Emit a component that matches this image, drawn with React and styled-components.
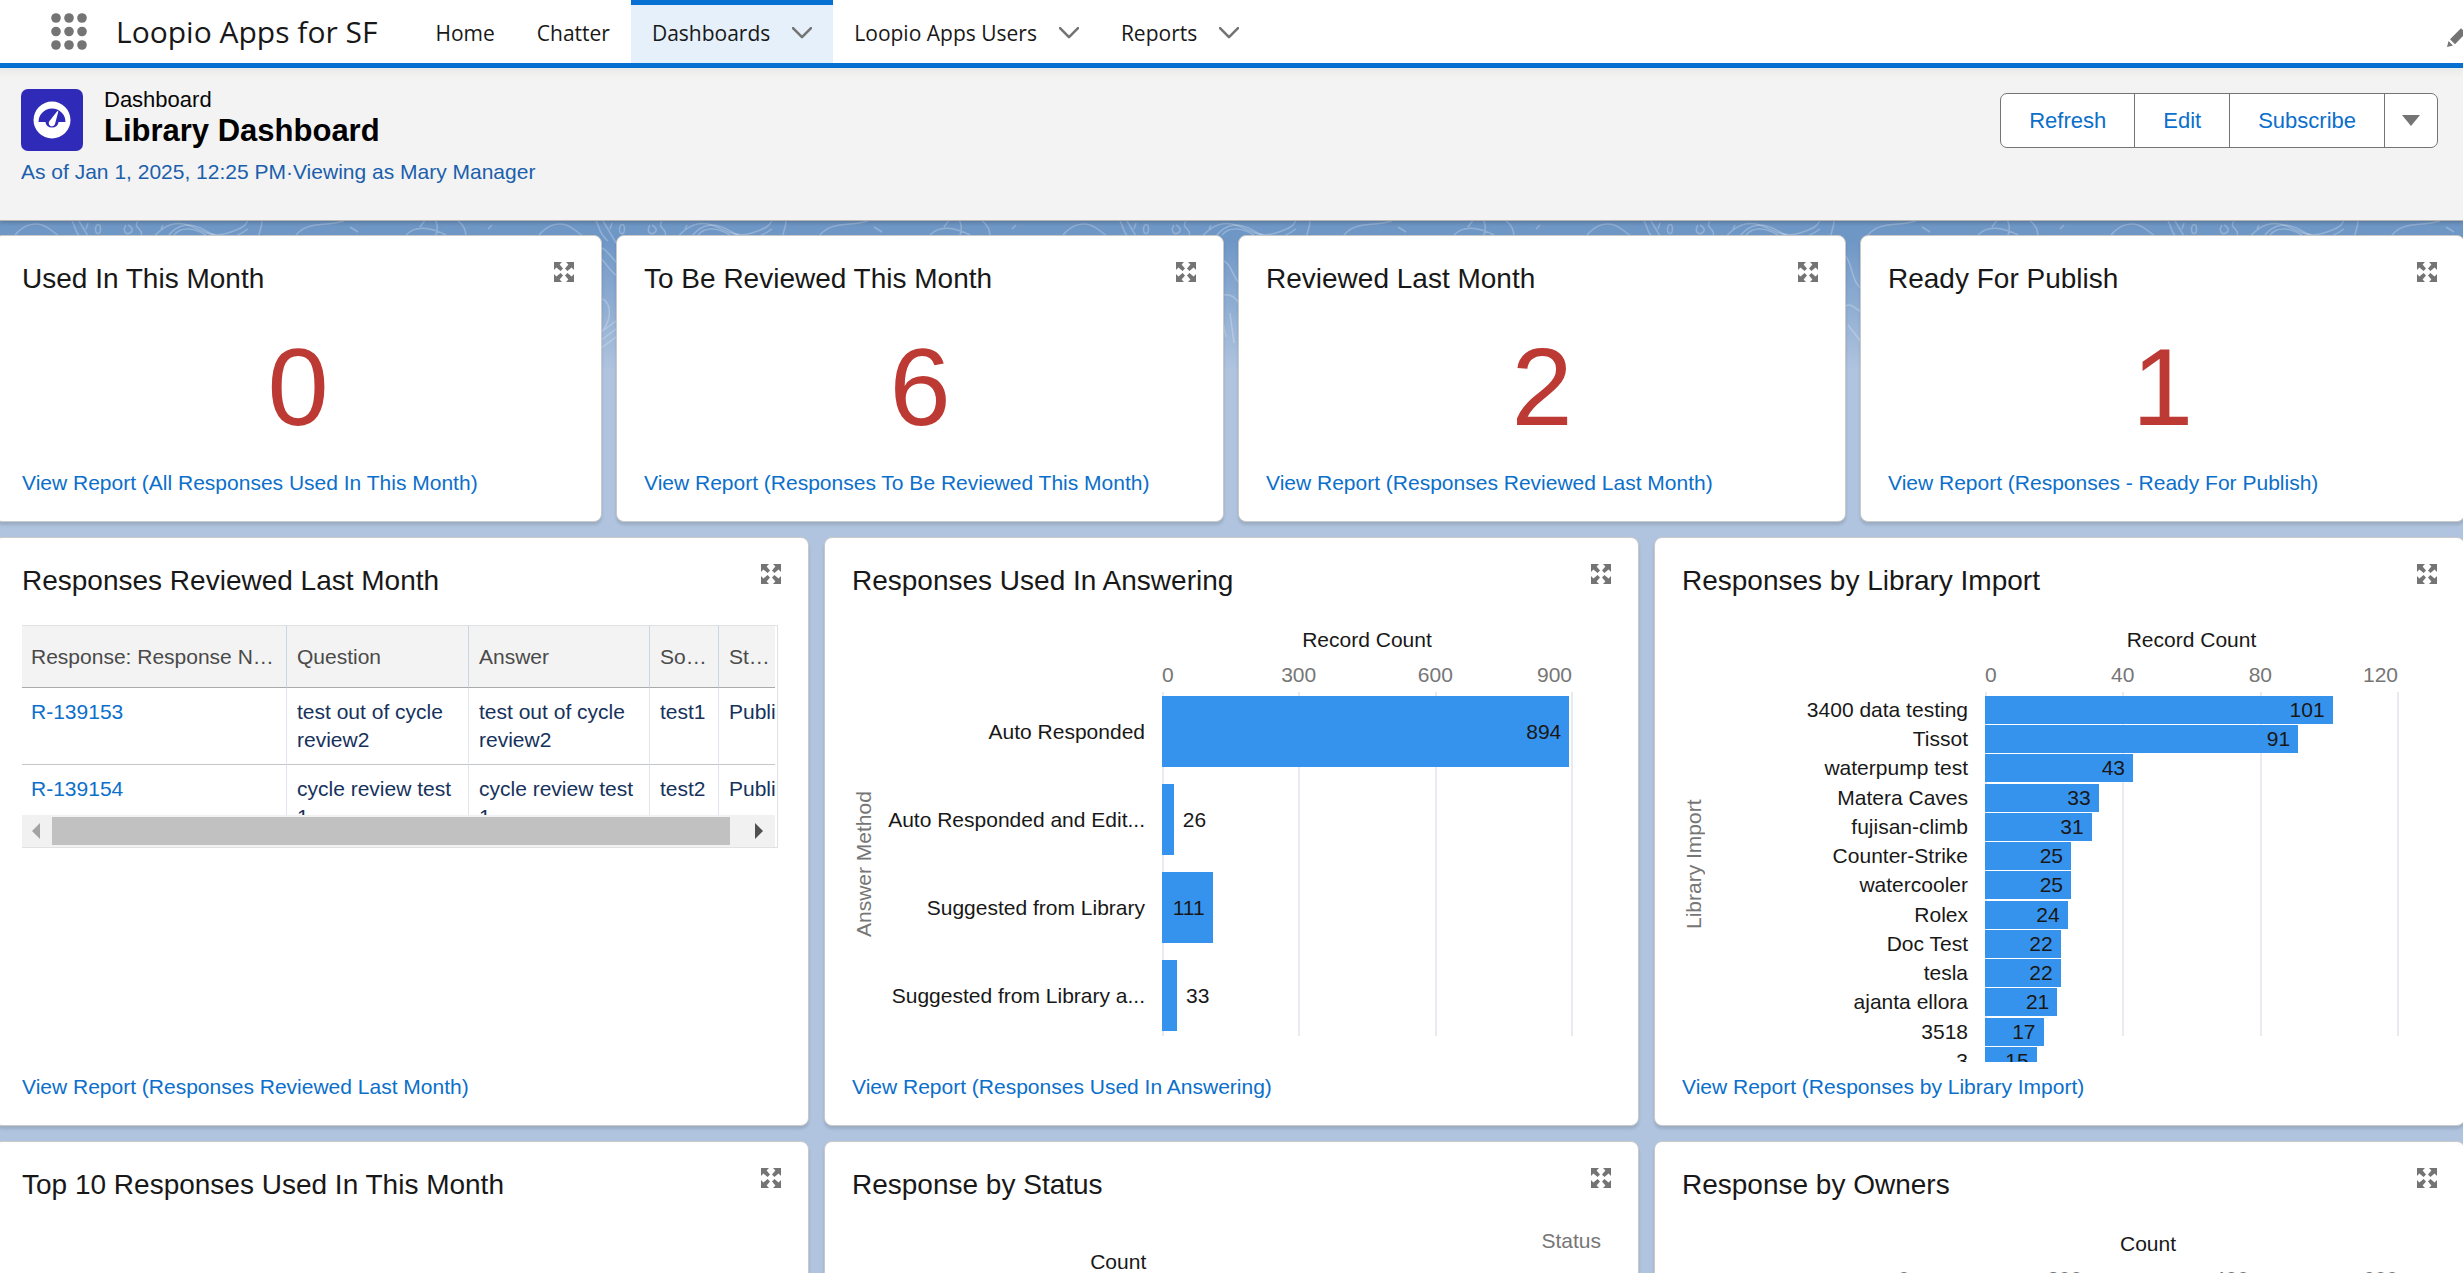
import React from "react";
import styled, { createGlobalStyle, css } from "styled-components";

const GlobalStyle = createGlobalStyle`
	* {
		box-sizing: border-box;
	}
	body {
		margin: 0;
		overflow: hidden;
		font-family: "Liberation Sans", Arial, sans-serif;
		font-size: 21px;
		line-height: 28px;
		color: #181818;
	}
	a {
		color: inherit;
		text-decoration: none;
	}
	button {
		margin: 0;
		padding: 0;
		border: 0;
		background: none;
		font: inherit;
		color: inherit;
		cursor: pointer;
	}
`;

// contour lines drawn behind the cards, one tile
const contour = encodeURIComponent(`
<svg xmlns="http://www.w3.org/2000/svg" width="524" height="150" fill="none" stroke="#fff" stroke-opacity="0.24" stroke-width="1.5">
	<path d="M15 14C25 2 38 0 48 7S58 14 62 18"/>
	<path d="M72 0C76 6 74 12 84 20M79 0C84 8 86 12 92 22"/>
	<ellipse cx="98" cy="8" rx="2.5" ry="4.500"/>
	<path d="M88 2L86 8M126 4C122 10 126 14 130 12S132 6 128 4M138 0C132 8 146 8 140 16M163 4L161 8"/>
	<path d="M152 18C160 8 170 0 184 3S208 18 228 12S246 2 250-4"/>
	<path d="M174 14C182 4 196 8 206 14M166 18C178 0 192 2 206 10S232 20 248 8"/>
	<path d="M262 0C262 8 258 12 258 20M296 14C308 0 322 6 344 0M350 6L358 11"/>
	<path d="M406 14C416 4 430 6 446 14M420 6C424 0 428-4 432-6M434-4C438 4 438 8 436 14M458 0C464 4 466 10 466 16M488 8L492 4"/>
	<path d="M70 24C84 26 88 40 98 46M72 34C82 38 84 52 98 58M70 90C76 66 90 84 84 100S74 110 70 120M76 112L92 100M76 120L92 108M76 128L92 116"/>
	<path d="M170 40C184 36 184 60 194 64M172 76C182 70 190 78 192 86M174 96L178 116M182 92L186 122"/>
	<path d="M270 30C284 44 276 62 294 70M272 86C280 78 288 96 294 90M276 104L290 122"/>
</svg>`);

const Page = styled.div`
	display: flex;
	flex-direction: column;
	height: 100vh;
	overflow: hidden;
	background: #b0c4df;
`;

const Nav = styled.nav`
	flex: none;
	display: flex;
	align-items: stretch;
	height: 68px;
	padding-left: 51px;
	border-bottom: 5px solid #0670d3;
	background: #fff;
	font-family: "Open Sans", "Noto Sans", sans-serif;
	white-space: nowrap;
`;

const Launcher = styled.button`
	display: flex;
	align-items: center;
	margin-right: 29px;
`;

const AppName = styled.span`
	margin-right: 37px;
	font-size: 30px;
	line-height: 63px;
`;

const Tab = styled.a`
	display: flex;
	align-items: center;
	gap: 22px;
	padding: 0 21px 3px;
	border-top: 5px solid transparent;
	font-size: 21px;

	${p =>
		p.$active &&
		css`
			border-top-color: #0670d3;
			background: #e5f0fa;
		`}
`;

const NavEdit = styled.button`
	flex: none;
	display: flex;
	align-items: center;
	margin-left: auto;
	margin-right: -5px;
	padding-top: 11px;
`;

const Header = styled.header`
	position: relative;
	flex: none;
	display: flex;
	justify-content: space-between;
	align-items: flex-start;
	padding: 19px 25px 34px 21px;
	border-bottom: 1px solid #b4b4b4;
	background: linear-gradient(#eaeae8, #f3f3f3 10px);
	box-shadow: 0 2px 4px rgba(0, 0, 0, 0.2);
`;

const TitleRow = styled.div`
	display: flex;
	gap: 21px;
	margin-bottom: 7px;
`;

const HeaderIcon = styled.svg`
	margin-top: 2px;
	border-radius: 7px;
	background: #2f2ab8;
`;

const Kind = styled.div`
	font-size: 22px;
	line-height: 26px;
	color: #080707;
`;

const PageTitle = styled.h1`
	margin: 0;
	font-size: 31px;
	line-height: 36px;
	color: #000;
`;

const AsOf = styled.div`
	color: #1b5fac;
`;

const ButtonGroup = styled.div`
	display: flex;
	height: 55px;
	margin-top: 6px;
	border: 1px solid #747474;
	border-radius: 7px;
	background: #fff;
	overflow: hidden;
`;

const GroupButton = styled.button`
	display: flex;
	align-items: center;
	justify-content: center;
	padding: ${p => (p.$icon ? "0 17px" : "0 28px")};
	font-size: 22px;
	color: #0b6fcb;

	& + & {
		border-left: 1px solid #747474;
	}
`;

const Board = styled.main`
	flex: 1;
	display: flex;
	flex-direction: column;
	gap: 15px;
	min-height: 0;
	margin: 0 -2px 0 -6px;
	padding-top: 14px;
	background: url("data:image/svg+xml,${contour}") 6px 0 repeat-x,
		linear-gradient(#6f97c6 20px, #b0c4df 150px);
`;

const Row = styled.div`
	flex: none;
	display: grid;
	grid-template-columns: ${p => p.$columns};
	gap: ${p => p.$gap}px;
`;

const CardBox = styled.section`
	display: flex;
	flex-direction: column;
	min-width: 0;
	min-height: ${p => p.$minHeight}px;
	padding: 25px 27px 24px;
	border: 1px solid #c9c9c9;
	border-radius: 8px;
	background: #fff;
	box-shadow: 0 3px 3px rgba(0, 0, 0, 0.12);
`;

const CardHeader = styled.div`
	display: flex;
	justify-content: space-between;
	align-items: flex-start;
`;

const CardTitle = styled.h2`
	margin: 0;
	font-size: 28px;
	font-weight: 400;
	line-height: 36px;
`;

const Expand = styled.button`
	display: flex;
	margin-top: 1px;
`;

const Body = styled.div`
	flex: 1 1 0;
	min-height: 0;
	overflow: hidden;
	margin-bottom: 11px;
	padding-top: ${p => p.$top || 26}px;
`;

const ReportLink = styled.a`
	align-self: flex-start;
	color: #0b6fcb;
`;

const Metric = styled.div`
	font-size: 110px;
	line-height: 108px;
	text-align: center;
	color: #bd3933;
`;

const TableBox = styled.div`
	margin: 0 3px 0 -2px;
	border: 1px solid #dfe1e5;
	border-left: 0;
`;

const TableClip = styled.div`
	height: 189px;
	margin-right: 2px;
	overflow: hidden;
`;

const Table = styled.table`
	width: 767px;
	table-layout: fixed;
	border-collapse: separate;
	border-spacing: 0;
	color: #16325c;

	th,
	td {
		padding: 10px 8px 10px 11px;
		border-bottom: 1px solid #c4c6ca;
		text-align: left;
		vertical-align: top;
	}
	th {
		height: 62px;
		padding: 0 0 0 11px;
		border-bottom-color: #a8aaad;
		background: #f3f3f3;
		font-weight: 400;
		color: #4a4a4a;
		vertical-align: middle;
		white-space: nowrap;
	}
	th + th {
		border-left: 1px solid #ccd5e2;
		padding-left: 10px;
	}
	td + td {
		border-left: 1px solid #e0e5ee;
		padding-left: 10px;
	}
	td a {
		color: #0b6fcb;
	}
`;

const ScrollTrack = styled.div`
	display: flex;
	align-items: center;
	gap: 12px;
	height: 32px;
	margin-right: 2px;
	padding: 0 12px;
	background: #f1f1f1;
`;

const ScrollThumb = styled.div`
	flex: 1;
	height: 28px;
	margin-right: 13px;
	background: #c1c1c1;
`;

const ChartGrid = styled.div`
	display: grid;
	grid-template-columns: 24px ${p => p.$labels}px 1fr;
	margin-right: 39px;
`;

const MeasureName = styled.div`
	grid-column: 3;
	line-height: 30px;
	text-align: center;
`;

const Ticks = styled.div`
	grid-column: 3;
	display: flex;
	justify-content: space-between;
	margin: 6px 0 3px;
	color: #767676;
`;

const Tick = styled.span`
	flex: 2 1 0;
	text-align: center;

	&:first-child {
		flex-grow: 1;
		text-align: left;
	}
	&:last-child {
		flex-grow: 1;
		text-align: right;
	}
`;

const AxisName = styled.div`
	grid-row: 3;
	grid-column: 1;
	height: 344px;
	line-height: 24px;
	writing-mode: vertical-rl;
	transform: rotate(180deg);
	text-align: center;
	color: #767676;
`;

const GridLines = styled.div`
	grid-row: 3;
	grid-column: 3;
	display: flex;
	justify-content: space-between;
	height: 344px;
	margin-right: -1px;

	i {
		width: 2px;
		background: #e8ebf1;
	}
`;

const Bars = styled.div`
	grid-row: 3;
	grid-column: 2 / 4;
	display: flex;
	flex-direction: column;
	height: ${p => p.$height}px;
	margin-top: 4px;
`;

const BarRow = styled.div`
	flex: 1 1 0;
	display: grid;
	grid-template-columns: ${p => p.$labels}px 1fr;
	padding-bottom: ${p => p.$gap}px;
	min-height: 0;
	white-space: nowrap;
`;

const BarLabel = styled.div`
	align-self: center;
	padding-right: 17px;
	text-align: right;
`;

const BarTrack = styled.div`
	display: flex;
	align-items: center;
	gap: 9px;
`;

const Bar = styled.div`
	display: flex;
	align-items: center;
	justify-content: flex-end;
	height: 100%;
	padding-right: ${p => (p.$filled ? 8 : 0)}px;
	background: #3693ed;
`;

const DonutArea = styled.div`
	display: flex;
	align-items: flex-start;
	justify-content: space-between;
	padding-right: 10px;
`;

const DonutMeasure = styled.div`
	flex: 1;
	padding: 19px 157px 0 0;
	text-align: center;
`;

const Legend = styled.div`
	line-height: 24px;
	color: #767676;
`;

const Chevron = () => (
	<svg width="20" height="12" viewBox="0 0 20 12" fill="none" stroke="#747474" strokeWidth="2.600">
		<path d="M1 1.200l9 9 9-9" strokeLinecap="round" strokeLinejoin="round" />
	</svg>
);

const Arrow = ({ left, color }) => (
	<svg width="8" height="16" viewBox="0 0 8 16" fill={color}>
		<path d={left ? "M8 0v16L0 8z" : "M0 0v16l8-8z"} />
	</svg>
);

const corner = "M0 0h8L5.600 2.400l3.400 4.200L6.600 9 2.400 5.600 0 8z";

const ExpandIcon = () => (
	<svg width="20" height="20" viewBox="0 0 20 20" fill="#747474">
		{[0, 90, 180, 270].map(angle => (
			<path key={angle} d={corner} transform={`rotate(${angle} 10 10)`} />
		))}
	</svg>
);

const Card = ({ title, report, minHeight, children }) => (
	<CardBox $minHeight={minHeight}>
		<CardHeader>
			<CardTitle>{title}</CardTitle>
			<Expand aria-label={`Expand ${title}`}>
				<ExpandIcon />
			</Expand>
		</CardHeader>
		{children}
		{report && <ReportLink href="#report">View Report ({report})</ReportLink>}
	</CardBox>
);

const BarChart = ({ measure, axis, ticks, labels, rows = [], height, gap }) => {
	const max = ticks[ticks.length - 1];
	return (
		<ChartGrid $labels={labels}>
			<MeasureName>{measure}</MeasureName>
			<Ticks>
				{ticks.map(t => (
					<Tick key={t}>{t}</Tick>
				))}
			</Ticks>
			<AxisName>{axis}</AxisName>
			<GridLines>
				{ticks.map(t => (
					<i key={t} />
				))}
			</GridLines>
			<Bars $height={height}>
				{rows.map(([name, value]) => {
					const filled = value / max > 0.1;
					return (
						<BarRow key={name} $labels={labels} $gap={gap}>
							<BarLabel>{name}</BarLabel>
							<BarTrack>
								<Bar $filled={filled} style={{ width: `${(value / max) * 100}%` }}>
									{filled && value}
								</Bar>
								{!filled && <span>{value}</span>}
							</BarTrack>
						</BarRow>
					);
				})}
			</Bars>
		</ChartGrid>
	);
};

const metrics = [
	["Used In This Month", 0, "All Responses Used In This Month"],
	["To Be Reviewed This Month", 6, "Responses To Be Reviewed This Month"],
	["Reviewed Last Month", 2, "Responses Reviewed Last Month"],
	["Ready For Publish", 1, "Responses - Ready For Publish"],
];

const methods = [
	["Auto Responded", 894],
	["Auto Responded and Edit...", 26],
	["Suggested from Library", 111],
	["Suggested from Library a...", 33],
];

const imports = [
	["3400 data testing", 101],
	["Tissot", 91],
	["waterpump test", 43],
	["Matera Caves", 33],
	["fujisan-climb", 31],
	["Counter-Strike", 25],
	["watercooler", 25],
	["Rolex", 24],
	["Doc Test", 22],
	["tesla", 22],
	["ajanta ellora", 21],
	["3518", 17],
	["3", 15],
];

const responses = [
	["R-139153", "test out of cycle review2", "test1"],
	["R-139154", "cycle review test 1", "test2"],
];

const App = () => (
	<Page>
		<GlobalStyle />
		<Nav>
			<Launcher aria-label="App Launcher">
				<svg width="36" height="37" viewBox="0 0 36 37" fill="#747474">
					{[5, 18.5, 32].map(y => [5, 18, 31].map(x => <circle key={`${x}-${y}`} cx={x} cy={y} r="4.800" />))}
				</svg>
			</Launcher>
			<AppName>Loopio Apps for SF</AppName>
			<Tab href="#home">Home</Tab>
			<Tab href="#chatter">Chatter</Tab>
			<Tab href="#dashboards" $active>
				Dashboards
				<Chevron />
			</Tab>
			<Tab href="#users">
				Loopio Apps Users
				<Chevron />
			</Tab>
			<Tab href="#reports">
				Reports
				<Chevron />
			</Tab>
			<NavEdit aria-label="Edit navigation">
				<svg width="21" height="20" viewBox="0 0 21 20" fill="#747474">
					<path d="M0 20l1.500-6L6 18.500zM3 12.200L14 1.300l4.800 4.700L8 17.200z" />
				</svg>
			</NavEdit>
		</Nav>

		<Header>
			<div>
				<TitleRow>
					<HeaderIcon width="62" height="62" viewBox="-31 -31 62 62">
						<circle r="18.500" fill="#fff" />
						<path d="M-13.500 2a13.500 13.500 0 1 1 27 0H6.500a6.500 5.500 0 0 1-13 0z" fill="#2f2ab8" />
						<path d="M5.200-8.800q1-.6 1.100.6L3 4A3.200 3.200 0 1 1-2.500 1z" fill="#fff" />
					</HeaderIcon>
					<div>
						<Kind>Dashboard</Kind>
						<PageTitle>Library Dashboard</PageTitle>
					</div>
				</TitleRow>
				<AsOf>As of Jan 1, 2025, 12:25 PM·Viewing as Mary Manager</AsOf>
			</div>
			<ButtonGroup>
				<GroupButton>Refresh</GroupButton>
				<GroupButton>Edit</GroupButton>
				<GroupButton>Subscribe</GroupButton>
				<GroupButton $icon aria-label="More actions">
					<svg width="18" height="11" viewBox="0 0 18 11" fill="#747474">
						<path d="M0 0h18L9 11z" />
					</svg>
				</GroupButton>
			</ButtonGroup>
		</Header>

		<Board>
			<Row $columns="608fr 608fr 608fr 605fr" $gap={14}>
				{metrics.map(([title, value, report]) => (
					<Card key={title} title={title} report={report} minHeight={287}>
						<Body $top={36}>
							<Metric>{value}</Metric>
						</Body>
					</Card>
				))}
			</Row>

			<Row $columns="815fr 815fr 811fr" $gap={15}>
				<Card title="Responses Reviewed Last Month" report="Responses Reviewed Last Month" minHeight={589}>
					<Body>
						<TableBox>
							<TableClip>
								<Table>
									<colgroup>
										<col width="266" />
										<col width="182" />
										<col width="181" />
										<col width="69" />
										<col width="69" />
									</colgroup>
									<thead>
										<tr>
											<th>Response: Response N…</th>
											<th>Question</th>
											<th>Answer</th>
											<th>So…</th>
											<th>St…</th>
										</tr>
									</thead>
									<tbody>
										{responses.map(([id, text, source]) => (
											<tr key={id}>
												<td>
													<a href={`#${id}`}>{id}</a>
												</td>
												<td>{text}</td>
												<td>{text}</td>
												<td>{source}</td>
												<td>Published</td>
											</tr>
										))}
									</tbody>
								</Table>
							</TableClip>
							<ScrollTrack>
								<Arrow left color="#a3a3a3" />
								<ScrollThumb />
								<Arrow color="#505050" />
							</ScrollTrack>
						</TableBox>
					</Body>
				</Card>
				<Card title="Responses Used In Answering" report="Responses Used In Answering" minHeight={589}>
					<Body>
						<BarChart
							measure="Record Count"
							axis="Answer Method"
							ticks={[0, 300, 600, 900]}
							labels={286}
							rows={methods}
							height={352}
							gap={17}
						/>
					</Body>
				</Card>
				<Card title="Responses by Library Import" report="Responses by Library Import" minHeight={589}>
					<Body>
						<BarChart
							measure="Record Count"
							axis="Library Import"
							ticks={[0, 40, 80, 120]}
							labels={279}
							rows={imports}
							height={380}
							gap={2}
						/>
					</Body>
				</Card>
			</Row>

			<Row $columns="815fr 815fr 811fr" $gap={15}>
				<Card title="Top 10 Responses Used In This Month" minHeight={589} />
				<Card title="Response by Status" minHeight={589}>
					<Body>
						<DonutArea>
							<DonutMeasure>Count</DonutMeasure>
							<Legend>Status</Legend>
						</DonutArea>
					</Body>
				</Card>
				<Card title="Response by Owners" minHeight={589}>
					<Body>
						<BarChart measure="Count" ticks={[0, 200, 400, 600]} labels={192} height={352} />
					</Body>
				</Card>
			</Row>
		</Board>
	</Page>
);

export default App;
